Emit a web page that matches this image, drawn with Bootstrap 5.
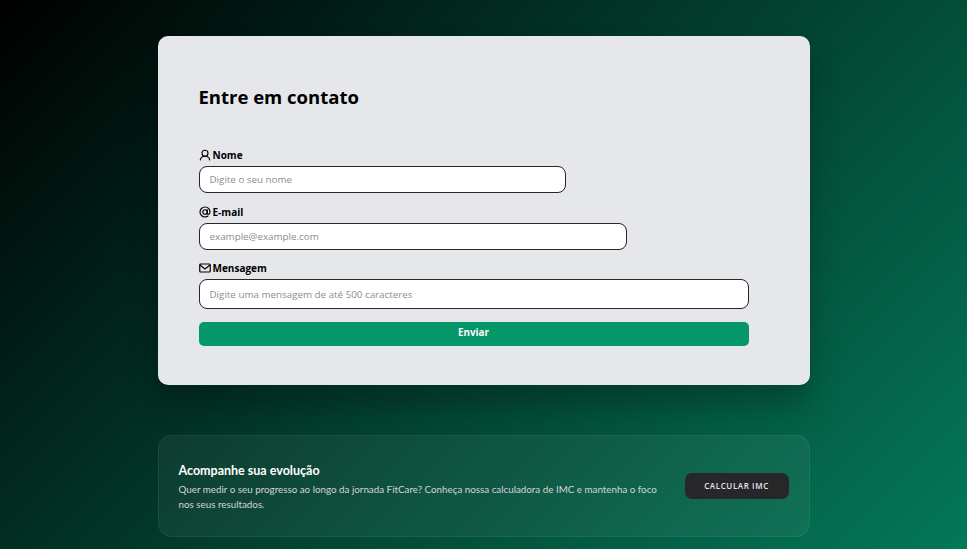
<!DOCTYPE html>
<html lang="pt-BR">
<head>
  <meta charset="UTF-8">
  <title>Entre em contato</title>
  <meta name="viewport" content="width=device-width, initial-scale=1.0">
  <link href="https://cdn.jsdelivr.net/npm/bootstrap@5.3.3/dist/css/bootstrap.min.css" rel="stylesheet">
  <style>
    html, body {
      height: 100%;
    }
    body {
      background: linear-gradient(135deg, #000 0%, #02382a 45%, #047857 100%);
      font-family: "Open Sans", "Noto Sans", sans-serif;
      overflow: hidden;
    }
    .page-wrap {
      width: 652px;
      margin: 0 auto;
      padding-top: 36px;
    }
    .contact-card {
      background: #e5e7eb;
      height: 349px;
      border-radius: 10px;
      padding: 41px 61px 41px 41px;
      box-shadow: 0 20px 30px rgba(0, 0, 0, .25);
    }
    .contact-title {
      font-size: 18.5px;
      font-weight: 700;
      line-height: 40px;
      margin: 0 0 30px;
      color: #000;
    }
    .field-label {
      font-size: 10px;
      font-weight: 700;
      line-height: 16px;
      color: #000;
      margin-bottom: 3px;
      gap: 2px;
    }
    .field-label svg {
      width: 12px;
      height: 12px;
      flex: none;
    }
    .field-input {
      font-size: 9.8px;
      height: 27px;
      padding: 0 10px;
      border: 1.5px solid #27272a;
      border-radius: 8px;
      margin-bottom: 11px;
      color: #111;
    }
    .field-input::placeholder {
      color: #8d8d8d;
    }
    .w-name { width: 367px; }
    .w-email { width: 428px; margin-bottom: 10px; }
    .w-msg { height: 30px; }
    .send-btn {
      background: #059669;
      color: #fff;
      font-size: 9.8px;
      font-weight: 700;
      height: 24px;
      border: 0;
      border-radius: 5px;
      padding: 0;
    }
    .send-btn:hover {
      background: #047857;
      color: #fff;
    }
    .imc-card {
      margin-top: 50px;
      height: 102px;
      padding: 3px 20px 0;
      background: rgba(255, 255, 255, .05);
      border: 1px solid rgba(255, 255, 255, .06);
      border-radius: 14px;
    }
    .imc-title {
      font-family: "Lato", sans-serif;
      font-size: 12.5px;
      font-weight: 700;
      color: #fff;
      margin: 0 0 4px;
    }
    .imc-text {
      font-family: "Lato", sans-serif;
      font-size: 9.8px;
      line-height: 15px;
      color: #d1d5db;
      margin: 0;
      width: 490px;
    }
    .imc-btn {
      width: 104px;
      height: 26px;
      margin-top: -3px;
      background: #27272a;
      color: #e5e7eb;
      font-size: 8px;
      font-weight: 600;
      letter-spacing: .6px;
      border: 0;
      border-radius: 7px;
      padding: 0;
    }
  </style>
</head>
<body>
  <div class="page-wrap">
    <!-- Formulario -->
    <div class="contact-card">
      <h2 class="contact-title">Entre em contato</h2>
      <form>
        <label class="field-label d-flex align-items-center" for="nome">
          <svg viewBox="0 0 24 24" fill="none" stroke="#000" stroke-width="2.2" stroke-linecap="round"><circle cx="12" cy="8.5" r="6"/><path d="M2.5 22c1.2-5 4.6-7.500 9.500-7.500s8.300 2.500 9.500 7.500"/></svg>
          Nome
        </label>
        <input type="text" id="nome" class="form-control field-input w-name" placeholder="Digite o seu nome">

        <label class="field-label d-flex align-items-center" for="email">
          <svg viewBox="0 0 24 24" fill="none" stroke="#000" stroke-width="2.4" stroke-linecap="round"><circle cx="12" cy="12" r="4.500"/><path d="M16.500 7.500v6.500c0 4 5.500 3.500 5.500-2 0-6-4.500-10-10-10S2 6.500 2 12s4.500 10 10 10c2.500 0 4.500-.7 6-1.800"/></svg>
          E-mail
        </label>
        <input type="email" id="email" class="form-control field-input w-email" placeholder="example@example.com">

        <label class="field-label d-flex align-items-center" for="mensagem">
          <svg viewBox="0 0 24 24" fill="none" stroke="#000" stroke-width="2.4" stroke-linejoin="round"><rect x="1.500" y="4" width="21" height="16" rx="2"/><path d="M2 6l10 8 10-8"/></svg>
          Mensagem
        </label>
        <input type="text" id="mensagem" class="form-control field-input w-msg" placeholder="Digite uma mensagem de até 500 caracteres">

        <button type="button" class="btn send-btn w-100">Enviar</button>
      </form>
    </div>

    <!-- Chamada IMC -->
    <div class="imc-card d-flex align-items-center justify-content-between">
      <div>
        <h3 class="imc-title">Acompanhe sua evolução</h3>
        <p class="imc-text">Quer medir o seu progresso ao longo da jornada FitCare? Conheça nossa calculadora de IMC e mantenha o foco nos seus resultados.</p>
      </div>
      <button type="button" class="btn imc-btn">CALCULAR IMC</button>
    </div>
  </div>
</body>
</html>
